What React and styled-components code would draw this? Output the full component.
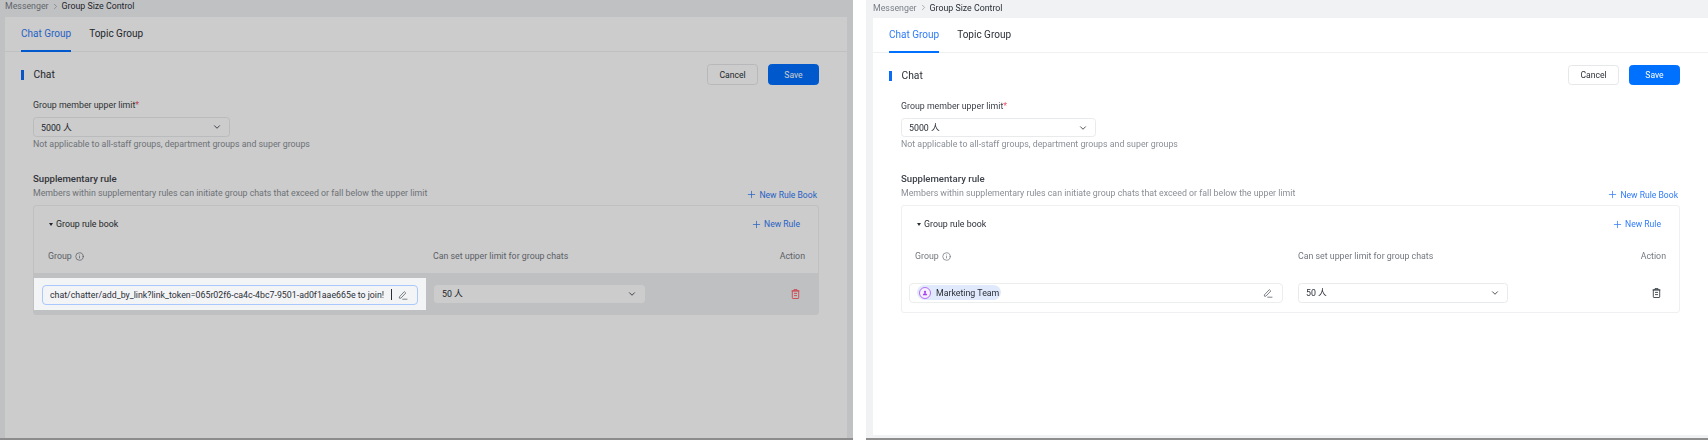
import React from 'react';
import styled, { createGlobalStyle, ThemeProvider } from 'styled-components';
import { ChevronDown, ChevronRight, Info, Plus } from 'lucide-react';

const GlobalStyle = createGlobalStyle`
  html, body {
    margin: 0;
    height: 100%;
    background: #fff;
    font-family: Roboto, "Noto Sans", "Noto Sans CJK SC", sans-serif;
    color: #2b2f36;
  }
  #root { height: 100%; }
`;

const dimmedView = {
  padL: 5, padR: 6, barH: 17, crumbLift: 5, cardGap: 0, btnH: 21,
  colOne: 385, headPad: 14, cellW: 392, cellPad: '7px 8px 5px 8px', cellGap: 8,
  strip: '#b0b0b0',
};
const plainView = {
  padL: 7, padR: 0, barH: 18, crumbLift: 3, cardGap: 2.5, btnH: 20,
  colOne: 383, headPad: 13, cellW: 389, cellPad: '0 8px 0 7px', cellGap: 7,
  strip: '#8e8e8e',
};

const Page = styled.div`
  display: flex;
  height: 440px;
  width: 1708px;
  overflow: hidden;
  gap: 13px;
  filter: blur(0.4px);
`;

const Panel = styled.div`
  position: relative;
  overflow: hidden;
  display: flex;
  flex-direction: column;
  flex: ${p => (p.$dimmed ? '0 0 853px' : '1')};
  height: 440px;
  background: #f1f2f4;
  padding: 0 ${p => p.theme.padR}px 0 ${p => p.theme.padL}px;
  box-sizing: border-box;
`;

const Strip = styled.div`
  flex: 0 0 2.5px;
  margin: 0 -${p => p.theme.padR}px 0 -${p => p.theme.padL}px;
  background: ${p => p.theme.strip};
`;

const Crumbs = styled.div`
  display: flex;
  align-items: center;
  gap: 2px;
  flex: 0 0 ${p => p.theme.barH}px;
  box-sizing: border-box;
  padding-bottom: ${p => p.theme.crumbLift}px;
  font-size: 8.8px;
  color: #7a7f87;
`;

const CrumbNow = styled.span`
  color: #2b2f36;
`;

const Card = styled.div`
  flex: 1;
  background: #fff;
  margin-bottom: ${p => p.theme.cardGap}px;
`;

const Tabs = styled.div`
  display: flex;
  gap: 18px;
  height: 35px;
  padding-left: 16px;
  box-sizing: border-box;
  border-bottom: 1.5px solid #eff0f1;
`;

const Tab = styled.div`
  display: flex;
  align-items: center;
  height: 35px;
  box-sizing: border-box;
  border-bottom: 2px solid ${p => (p.$active ? '#0070ff' : 'transparent')};
  font-size: 10px;
  color: ${p => (p.$active ? '#2f7bf6' : '#2b2f36')};
`;

const Body = styled.div`
  padding: 12px 28px 0 28px;
`;

const Head = styled.div`
  display: flex;
  align-items: flex-start;
  height: 21px;
  gap: 10px;
`;

const Title = styled.div`
  flex: 1;
  display: flex;
  align-items: center;
  height: 21px;
  margin-left: -12px;
  gap: 10px;
  font-size: 10.3px;

  &::before {
    content: '';
    width: 2.5px;
    height: 10px;
    background: #0a6cf5;
  }
`;

const Button = styled.button`
  width: 51px;
  height: ${p => p.theme.btnH}px;
  padding: 0;
  border-radius: 3.5px;
  font: inherit;
  font-size: 8.6px;
  border: 1px solid ${p => (p.$primary ? '#0070ff' : '#e6e7e9')};
  background: ${p => (p.$primary ? '#0070ff' : '#fff')};
  color: ${p => (p.$primary ? '#fff' : '#2b2f36')};
`;

const Label = styled.div`
  margin-top: 13px;
  height: 14px;
  margin-bottom: 5px;
  line-height: 14px;
  font-size: 8.8px;
  color: #3a3e46;
`;

const Star = styled.span`
  color: #f0556a;
`;

const Select = styled.div`
  display: flex;
  align-items: center;
  justify-content: space-between;
  box-sizing: border-box;
  flex: none;
  width: ${p => p.$width}px;
  height: ${p => p.$height}px;
  padding: 0 7px;
  border: 1px solid ${p => (p.$flat ? 'transparent' : '#e9eaec')};
  border-radius: 3.5px;
  background: #fff;
  font-size: 8.8px;
  font-family: Roboto, "Noto Sans CJK SC", sans-serif;
  color: #2b2f36;
`;

const Help = styled.div`
  height: 14px;
  line-height: 14px;
  font-size: 8.8px;
  color: #8a8f96;
`;

const SubTitle = styled.div`
  margin-top: 21px;
  height: 14px;
  line-height: 14px;
  font-size: 9.6px;
  font-weight: 500;
  color: #3f434b;
`;

const SubRow = styled.div`
  display: flex;
  justify-content: space-between;
  align-items: flex-end;
`;

const LinkButton = styled.div`
  display: flex;
  align-items: center;
  gap: 2px;
  font-size: 8.6px;
  color: #2f7bf6;
  margin-right: ${p => p.$inset || 2}px;
`;

const Box = styled.div`
  margin-top: 5px;
  border: 1px solid #f0f0f2;
  border-radius: 3px;
`;

const BookHead = styled.div`
  display: flex;
  justify-content: space-between;
  align-items: center;
  height: 20px;
  margin-top: 8px;
  padding: 0 17px 0 15px;
`;

const BookName = styled.div`
  display: flex;
  align-items: center;
  gap: 3px;
  font-size: 8.8px;

  &::before {
    content: '';
    border: 2.5px solid transparent;
    border-top: 3px solid #2b2f36;
    border-bottom: 0;
  }
`;

const TableHead = styled.div`
  display: grid;
  grid-template-columns: ${p => p.theme.colOne}px 1fr auto;
  align-items: center;
  height: 32px;
  margin-top: 7px;
  padding: 0 13px 2px ${p => p.theme.headPad}px;
  box-sizing: border-box;
  font-size: 8.8px;
  color: #73787f;
`;

const GroupHeadCell = styled.div`
  display: flex;
  align-items: center;
  gap: 3px;
`;

const Row = styled.div`
  display: flex;
  align-items: center;
  height: ${p => (p.$hover ? 41 : 39)}px;
  background: ${p => (p.$hover ? '#eff0f2' : 'transparent')};
`;

const GroupCell = styled.div`
  position: relative;
  box-sizing: border-box;
  flex: 0 0 ${p => p.theme.cellW}px;
  min-width: 0;
  margin-right: ${p => p.theme.cellGap}px;
  padding: ${p => p.theme.cellPad};
  background: ${p => (p.$spot ? '#f3f4f6' : 'transparent')};
  box-shadow: ${p => (p.$spot ? '0 0 0 2000px rgba(0, 0, 0, 0.2)' : 'none')};
`;

const GroupInput = styled.div`
  display: flex;
  align-items: center;
  height: 20px;
  box-sizing: border-box;
  padding: 0 9px 0 7px;
  border: 1px solid ${p => (p.$focus ? '#a9c8fb' : '#eceded')};
  border-radius: 4px;
  font-size: 8.8px;
  color: #2b2f36;
  white-space: nowrap;
`;

const InputText = styled.span`
  flex: 1;
  overflow: hidden;
`;

const Caret = styled.span`
  width: 1px;
  height: 11px;
  margin: 0 6px 0 3px;
  background: #2b2f36;
`;

const Tag = styled.span`
  display: flex;
  align-items: center;
  gap: 5px;
  height: 14.5px;
  padding: 0 2px;
  margin-right: auto;
  border-radius: 8px;
  background: #e1eafc;
`;

const TagAvatar = styled.span`
  display: flex;
  align-items: center;
  justify-content: center;
  box-sizing: border-box;
  width: 12px;
  height: 12px;
  border: 1.2px solid #b56cf5;
  border-radius: 50%;
  background: #f6effd;
`;

const DeleteSlot = styled.div`
  display: flex;
  margin-left: auto;
  margin-right: 18px;
  color: ${p => (p.$danger ? '#ff5a65' : '#3a3e46')};
`;

const PenIcon = () => (
  <svg width="10" height="10" viewBox="0 0 10 10" fill="none" stroke="#60646b" strokeWidth="0.8">
    <path d="M1.4 6.9 6.3 1.6l1.5 1.4-4.9 5.2H1.4z" />
    <path d="M4.3 9.2H9.4" />
  </svg>
);

const TrashIcon = () => (
  <svg width="9" height="10" viewBox="0 0 9 10" fill="none" stroke="currentColor" strokeWidth="0.9">
    <path d="M1.3 1.9h6.4v7a.6.6 0 0 1-.6.6H1.9a.6.6 0 0 1-.6-.6z" />
    <path d="M.6 1.9h7.8M3 1.8V.6h3v1.2M3 4.4h3M3 6.6h3" />
  </svg>
);

const PersonGlyph = () => (
  <svg width="6" height="6" viewBox="0 0 6 6" fill="#a13ff0">
    <circle cx="3" cy="1.9" r="1.1" />
    <path d="M.8 5.2C1 3.8 2 3.3 3 3.3s2 .5 2.2 1.9z" />
  </svg>
);

function View({ dimmed }) {
  return (
    <ThemeProvider theme={dimmed ? dimmedView : plainView}>
      <Panel $dimmed={dimmed}>
        <Crumbs>
          <span>Messenger</span>
          <ChevronRight size={9} strokeWidth={1.5} />
          <CrumbNow>Group Size Control</CrumbNow>
        </Crumbs>
        <Card>
          <Tabs>
            <Tab $active>Chat Group</Tab>
            <Tab>Topic Group</Tab>
          </Tabs>
          <Body>
            <Head>
              <Title>Chat</Title>
              <Button>Cancel</Button>
              <Button $primary>Save</Button>
            </Head>
            <Label>Group member upper limit<Star>*</Star></Label>
            <Select $width={dimmed ? 197 : 195} $height={dimmed ? 20 : 19}>
              5000 人
              <ChevronDown size={10} color="#50545b" strokeWidth={2.4} />
            </Select>
            <Help>Not applicable to all-staff groups, department groups and super groups</Help>
            <SubTitle>Supplementary rule</SubTitle>
            <SubRow>
              <Help>Members within supplementary rules can initiate group chats that exceed or fall below the upper limit</Help>
              <LinkButton><Plus size={11} strokeWidth={1.6} />New Rule Book</LinkButton>
            </SubRow>
            <Box>
              <BookHead>
                <BookName>Group rule book</BookName>
                <LinkButton $inset={1}><Plus size={11} strokeWidth={1.6} />New Rule</LinkButton>
              </BookHead>
              <TableHead>
                <GroupHeadCell>Group <Info size={9} /></GroupHeadCell>
                <span>Can set upper limit for group chats</span>
                <span>Action</span>
              </TableHead>
              <Row $hover={dimmed}>
                <GroupCell $spot={dimmed}>
                  <GroupInput $focus={dimmed}>
                    {dimmed ? (
                      <>
                        <InputText>chat/chatter/add_by_link?link_token=065r02f6-ca4c-4bc7-9501-ad0f1aae665e to join!</InputText>
                        <Caret />
                      </>
                    ) : (
                      <Tag><TagAvatar><PersonGlyph /></TagAvatar>Marketing Team</Tag>
                    )}
                    <PenIcon />
                  </GroupInput>
                </GroupCell>
                <Select $width={dimmed ? 211 : 210} $height={dimmed ? 18 : 20} $flat={dimmed}>
                  50 人
                  <ChevronDown size={10} color="#50545b" strokeWidth={2.4} />
                </Select>
                <DeleteSlot $danger={dimmed}><TrashIcon /></DeleteSlot>
              </Row>
            </Box>
          </Body>
        </Card>
        <Strip />
      </Panel>
    </ThemeProvider>
  );
}

export default function App() {
  return (
    <>
      <GlobalStyle />
      <Page>
        <View dimmed />
        <View />
      </Page>
    </>
  );
}
